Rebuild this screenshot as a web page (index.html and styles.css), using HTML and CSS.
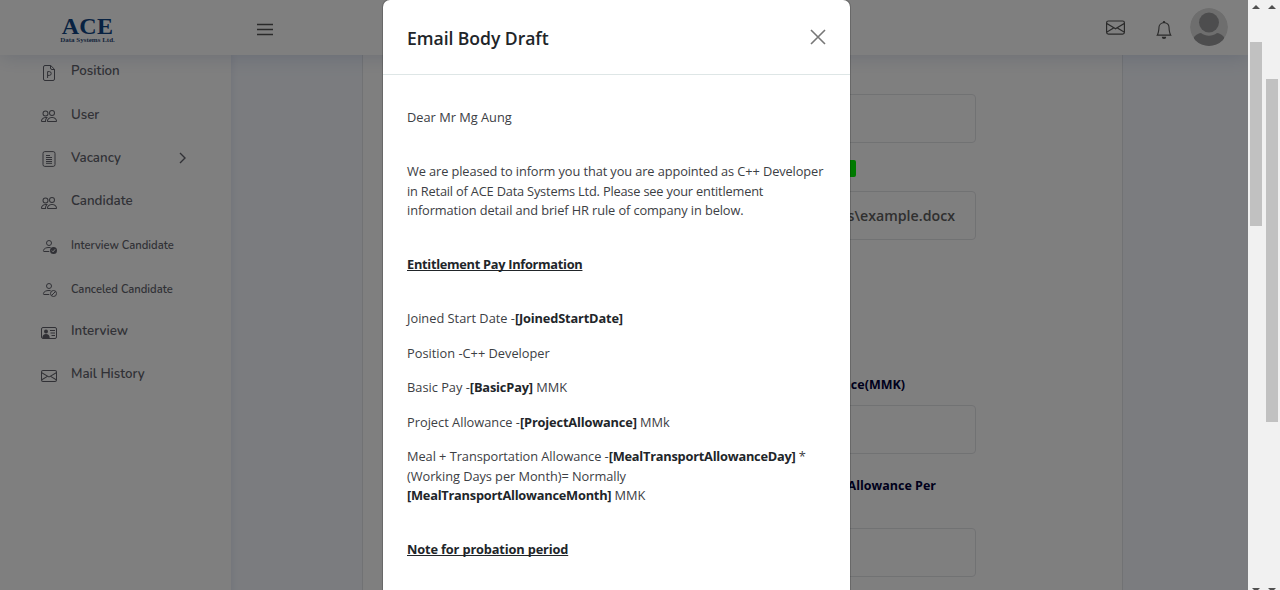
FILE: index.html
```html
<!DOCTYPE html>
<html lang="en">
<head>
<meta charset="utf-8">
<title>Email Body Draft</title>
<link rel="stylesheet" href="styles.css">
</head>
<body>
<svg class="sprite" aria-hidden="true">
  <symbol id="people" viewBox="0 0 16 16"><path d="M15 14s1 0 1-1-1-4-5-4-5 3-5 4 1 1 1 1h8Zm-7.978-1A.261.261 0 0 1 7 12.996c.001-.264.167-1.03.76-1.72C8.312 10.629 9.282 10 11 10c1.717 0 2.687.63 3.24 1.276.593.69.758 1.457.76 1.72l-.008.002a.274.274 0 0 1-.014.002H7.022ZM11 7a2 2 0 1 0 0-4 2 2 0 0 0 0 4Zm3-2a3 3 0 1 1-6 0 3 3 0 0 1 6 0ZM6.936 9.28a5.88 5.88 0 0 0-1.23-.247A7.35 7.35 0 0 0 5 9c-4 0-5 3-5 4 0 .667.333 1 1 1h4.216A2.238 2.238 0 0 1 5 13c0-1.01.377-2.042 1.09-2.904.243-.294.526-.569.846-.816ZM4.92 10A5.493 5.493 0 0 0 4 13H1c0-.26.164-1.03.76-1.724.545-.636 1.492-1.256 3.16-1.275ZM1.5 5.5a3 3 0 1 1 6 0 3 3 0 0 1-6 0Zm3-2a2 2 0 1 0 0 4 2 2 0 0 0 0-4Z"/></symbol>
  <symbol id="envelope" viewBox="0 0 16 16"><path d="M0 4a2 2 0 0 1 2-2h12a2 2 0 0 1 2 2v8a2 2 0 0 1-2 2H2a2 2 0 0 1-2-2V4Zm2-1a1 1 0 0 0-1 1v.217l7 4.2 7-4.2V4a1 1 0 0 0-1-1H2Zm13 2.383-4.708 2.825L15 11.105V5.383Zm-.034 6.876-5.64-3.471L8 9.583l-1.326-.795-5.64 3.47A1 1 0 0 0 2 13h12a1 1 0 0 0 .966-.741ZM1 11.105l4.708-2.897L1 5.383v5.722Z"/></symbol>
  <symbol id="bell" viewBox="0 0 16 16"><path d="M8 16a2 2 0 0 0 2-2H6a2 2 0 0 0 2 2zM8 1.918l-.797.161A4.002 4.002 0 0 0 4 6c0 .628-.134 2.197-.459 3.742-.16.767-.376 1.566-.663 2.258h10.244c-.287-.692-.502-1.49-.663-2.258C12.134 8.197 12 6.628 12 6a4.002 4.002 0 0 0-3.203-3.92L8 1.917zM14.22 12c.223.447.481.801.78 1H1c.299-.199.557-.553.78-1C2.68 10.2 3 6.88 3 6c0-2.42 1.72-4.44 4.005-4.901a1 1 0 1 1 1.99 0A5.002 5.002 0 0 1 13 6c0 .88.32 4.2 1.22 6z"/></symbol>
  <symbol id="file-p" viewBox="0 0 16 16"><path class="line" d="M9.7.5H4A1.5 1.5 0 0 0 2.500 2v12A1.500 1.500 0 0 0 4 15.500h8a1.500 1.500 0 0 0 1.500-1.500V4.300zM9.500.5V3a1.500 1.500 0 0 0 1.500 1.500h2.500M6.600 13V6.600h1.700a1.900 1.900 0 0 1 0 3.800H6.600"/></symbol>
  <symbol id="file-text" viewBox="0 0 16 16"><rect class="line" x="2" y=".6" width="12" height="14.800" rx="1.800"/><path class="line" d="M5 4.500h4M5 6.500h6M5 8.500h6M5 10.500h6M5 12.300h6"/></symbol>
  <symbol id="person" viewBox="0 0 16 16"><circle class="line" cx="8" cy="5" r="2.500"/><path class="line" d="M8.300 13.500H3c-.7 0-.7-.6-.5-1.200C3 10.500 5 9.500 8 9.500c.6 0 1.100 0 1.600.1"/></symbol>
  <symbol id="person-check" viewBox="0 0 16 16"><use href="#person"/><circle cx="12.500" cy="12.500" r="3.500"/><path class="tick" d="m10.900 12.600 1.200 1.200 2-2.500"/></symbol>
  <symbol id="person-slash" viewBox="0 0 16 16"><use href="#person"/><circle class="line" cx="12.500" cy="12.500" r="3"/><path class="line" d="m10.500 14.500 4-4"/></symbol>
  <symbol id="vcard" viewBox="0 0 16 16"><rect class="line" x=".5" y="2.500" width="15" height="11" rx="1.500"/><circle cx="5" cy="6.500" r="2"/><path d="M1.300 13c0-2.500 1.500-4 3.700-4s3.700 1.500 3.700 4z"/><path class="line" d="M9 5.500h5M9.500 8h4.500M10.500 10.500H14"/></symbol>
</svg>

<div class="screen">
  <div class="app">
    <header class="header">
      <div class="logo"><span class="logo-name">ACE</span><span class="logo-sub">Data Systems Ltd.</span></div>
      <svg class="menu" viewBox="0 0 16 13"><path d="M0 1.500h16M0 6.500h16M0 11.500h16"/></svg>
      <div class="actions">
        <svg class="mail"><use href="#envelope"/></svg>
        <svg class="bell"><use href="#bell"/></svg>
        <svg class="avatar" viewBox="0 0 38 38">
          <defs><clipPath id="round"><circle cx="19" cy="19" r="19"/></clipPath></defs>
          <g clip-path="url(#round)"><circle class="avatar-bg" cx="19" cy="19" r="19"/><circle class="avatar-fg" cx="19" cy="14.500" r="10"/><path class="avatar-fg" d="M4 29c3-3 5-4 7-4 5 3.500 11 3.500 16 0 2 0 4 1 7 4v9H4z"/></g>
        </svg>
      </div>
    </header>
    <div class="content">
      <nav class="sidebar">
        <a class="item"><svg class="icon"><use href="#file-p"/></svg><span>Position</span></a>
        <a class="item"><svg class="icon"><use href="#people"/></svg><span>User</span></a>
        <a class="item"><svg class="icon"><use href="#file-text"/></svg><span>Vacancy</span><svg class="chevron" viewBox="0 0 7 12"><path d="m1 1 5 5-5 5"/></svg></a>
        <a class="item"><svg class="icon"><use href="#people"/></svg><span>Candidate</span></a>
        <a class="item sub"><svg class="icon"><use href="#person-check"/></svg><span>Interview Candidate</span></a>
        <a class="item sub"><svg class="icon"><use href="#person-slash"/></svg><span>Canceled Candidate</span></a>
        <a class="item"><svg class="icon"><use href="#vcard"/></svg><span>Interview</span></a>
        <a class="item"><svg class="icon"><use href="#envelope"/></svg><span>Mail History</span></a>
      </nav>
      <main class="main">
        <section class="card">
          <div class="field"></div>
          <div class="badge-row"><span class="badge"></span></div>
          <div class="field path">Documents\example.docx</div>
          <div class="label first">Allowance(MMK)</div>
          <div class="field"></div>
          <div class="label second">Allowance Per</div>
          <div class="field"></div>
        </section>
      </main>
    </div>
  </div>
  <div class="scrollbar inner"><i class="up"></i><b class="thumb"></b><i class="down"></i></div>
  <div class="scrollbar outer"><i class="up"></i><b class="thumb"></b><i class="down"></i></div>

  <div class="backdrop">
    <div class="modal">
      <div class="modal-head">
        <h5 class="title">Email Body Draft</h5>
        <svg class="close" viewBox="0 0 16 16"><path d="m1 1 14 14M15 1 1 15"/></svg>
      </div>
      <div class="modal-body">
        <p class="spaced">Dear Mr Mg Aung</p>
        <p class="spaced intro">We are pleased to inform you that you are appointed as C++ Developer<br><span class="tight">in Retail of ACE Data Systems Ltd. Please see your entitlement</span><br>information detail and brief HR rule of company in below.</p>
        <p class="spaced"><b class="heading">Entitlement Pay Information</b></p>
        <p>Joined Start Date -<b>[JoinedStartDate]</b></p>
        <p>Position -C++ Developer</p>
        <p>Basic Pay -<b>[BasicPay]</b> MMK</p>
        <p>Project Allowance -<b>[ProjectAllowance]</b> MMk</p>
        <p class="spaced meal">Meal + Transportation Allowance -<b>[MealTransportAllowanceDay]</b> *<br>(Working Days per Month)= Normally<br><b>[MealTransportAllowanceMonth]</b> MMK</p>
        <p><b class="heading note">Note for probation period</b></p>
      </div>
    </div>
  </div>
</div>
</body>
</html>
```
FILE: styles.css
```css
* { box-sizing: border-box; }
body { margin: 0; overflow: hidden; font-family: "Open Sans", "Noto Sans", sans-serif; }
.sprite { position: absolute; width: 0; height: 0; }
.line { fill: none; stroke: currentColor; stroke-width: 1; }
.tick { fill: none; stroke: #fff; stroke-width: 1; }

.screen { position: relative; display: flex; width: 1280px; height: 590px; overflow: hidden; }
.app { display: flex; flex-direction: column; width: 1248px; height: 590px; overflow: hidden; background: #f6f9ff; }

.header { position: relative; z-index: 2; display: flex; align-items: center; flex: none; height: 55px; padding: 0 20px 0 60px; background: #fff; box-shadow: 0 2px 20px rgba(1, 41, 112, .15); }
.logo { display: flex; flex-direction: column; align-items: center; width: 55px; padding-top: 4px; color: #104584; font-family: "Liberation Serif", serif; font-weight: bold; white-space: nowrap; }
.logo-name { font-size: 24px; line-height: 21px; letter-spacing: .3px; }
.logo-sub { color: #2c4a78; font-size: 7px; line-height: 7px; }
.menu { width: 16px; height: 13px; margin: 4px 0 0 142px; fill: none; stroke: #555; stroke-width: 1.6; }
.actions { display: flex; align-items: center; margin-left: auto; color: #555; fill: currentColor; }
.mail { width: 19px; height: 19px; margin-right: 30px; }
.bell { width: 18px; height: 18px; margin: 5px 17px 0 0; }
.avatar { width: 38px; height: 38px; margin-top: -1px; }
.avatar-bg { fill: #ddd; }
.avatar-fg { fill: #9b9b9d; }

.content { display: flex; flex: 1; }
.sidebar { width: 231px; flex: none; margin-top: -5.400px; background: #fff; box-shadow: 0 0 8px rgba(1, 41, 112, .1); color: #62636c; }
.item { display: flex; align-items: center; height: 43.300px; padding-left: 41px; font-family: "Nunito", "Open Sans", sans-serif; font-size: 13.300px; font-weight: 600; white-space: nowrap; }
.item.sub { font-size: 11.200px; }
.item.sub span { padding-top: 3px; }
.icon { width: 16px; height: 16px; margin: 3px 14px 0 0; fill: currentColor; }
.chevron { width: 7px; height: 12px; margin: 0 45px 0 auto; fill: none; stroke: currentColor; stroke-width: 1.400; }

.main { flex: 1; padding-left: 131px; }
.card { width: 761px; height: 560px; padding: 39px 0 0 250px; background: #fff; border: solid #e2e5e9; border-width: 0 1px; }
.field { width: 363px; height: 49px; border: 1px solid #e2e4e7; border-radius: 4px; }
.path { padding-right: 20px; color: #606060; font-size: 14.200px; font-weight: 600; line-height: 48px; text-align: right; }
.badge-row { width: 243px; height: 48px; padding-top: 17px; }
.badge { display: block; width: 40px; height: 17px; margin-left: auto; border-radius: 2px; background: #00f400; }
.label { color: #000038; font-size: 12.500px; font-weight: 700; line-height: 20px; text-align: right; }
.first { width: 292px; padding-top: 135px; height: 165px; }
.second { width: 323px; padding-top: 22px; height: 74px; }

.scrollbar { display: flex; flex-direction: column; align-items: center; width: 16px; height: 590px; background: #f1f1f1; }
.up { margin-top: 5px; border: 4px solid transparent; border-top: 0; border-bottom: 4px solid #505050; }
.down { margin: auto 0 -2px; border: 4px solid transparent; border-bottom: 0; border-top: 4px solid #505050; }
.thumb { width: 12px; background: #c1c1c1; }
.inner .thumb { height: 184px; margin-top: 33px; }
.outer .thumb { height: 343px; margin-top: 70px; }

.backdrop { position: absolute; z-index: 5; top: 0; left: 0; display: flex; width: 1248px; height: 590px; padding-left: 383px; background: rgba(0, 0, 0, .5); }
.modal { width: 467px; height: 600px; border-radius: 7px 7px 0 0; background: #fff; color: #212529; box-shadow: 0 0 0 1px rgba(0, 0, 0, .18); }
.modal-head { display: flex; align-items: center; justify-content: space-between; height: 75px; padding: 0 24px; border-bottom: 1px solid #dee6e6; }
.title { margin: 1px 0 0; font-size: 17.600px; font-weight: 600; letter-spacing: -.06px; }
.close { width: 16px; height: 16px; fill: none; stroke: #777; stroke-width: 1.600; }
.modal-body { padding: 33px 24px 0; color: #3c4044; font-size: 12.800px; line-height: 19.300px; white-space: nowrap; }
.modal-body p { margin: 0 0 15.200px; }
.modal-body .spaced { margin-bottom: 35px; }
.modal-body b { color: #212529; font-weight: 700; letter-spacing: -.16px; }
.intro { letter-spacing: -.1px; }
.intro .tight { letter-spacing: -.19px; }
.intro, .intro .tight { word-spacing: 0; }
.meal { letter-spacing: -.05px; }
.modal-body .meal b { letter-spacing: -.23px; }
.modal-body .heading { letter-spacing: -.29px; text-decoration: underline; text-decoration-skip-ink: none; }
.modal-body .note { letter-spacing: -.15px; }
```
